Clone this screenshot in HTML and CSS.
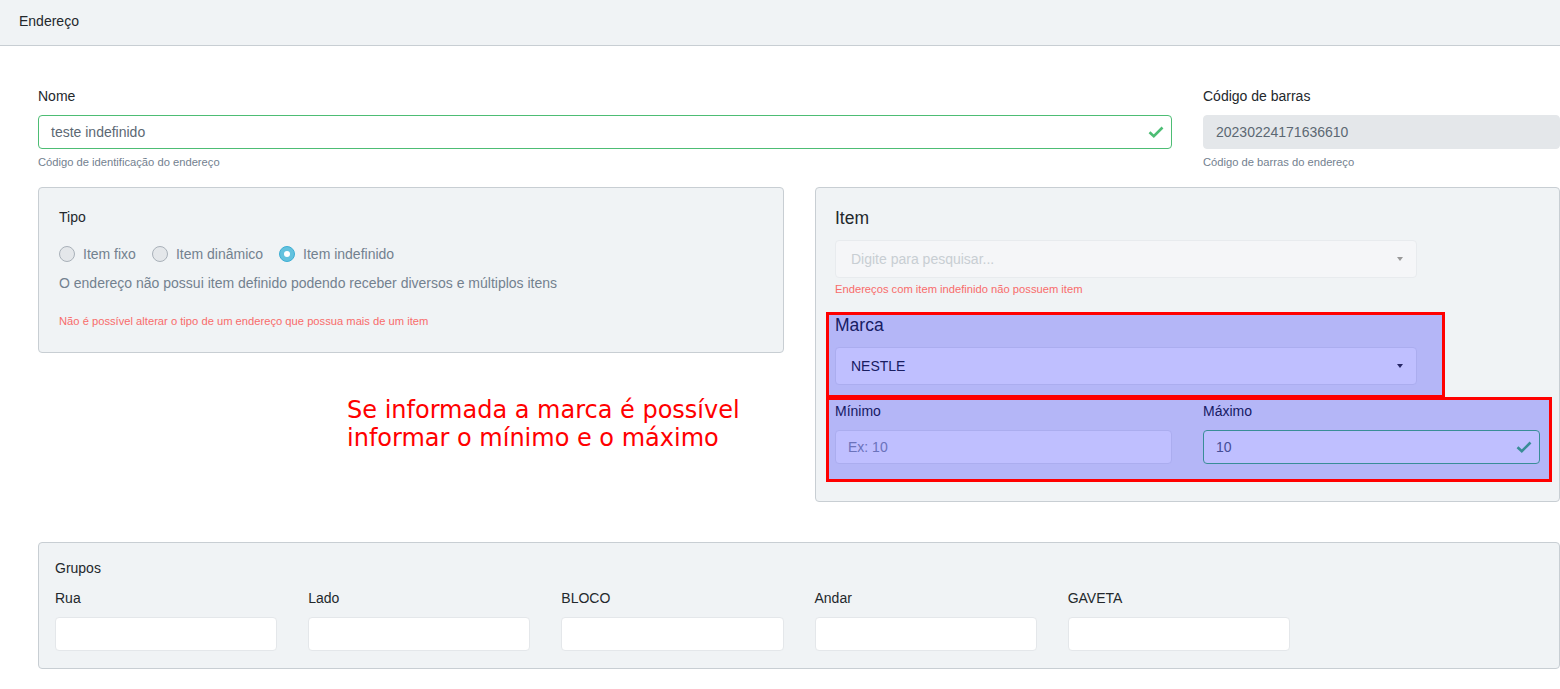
FILE: index.html
```html
<!DOCTYPE html>
<html lang="pt-BR">
<head>
    <meta charset="UTF-8">
    <meta name="viewport" content="width=device-width, initial-scale=1.0">
    <title>Endereço</title>
    <link rel="stylesheet" href="styles.css">
</head>
<body>
    <div class="card-header">Endereço</div>

    <div class="main">
        <div class="row-top">
            <div class="field">
                <label class="lbl">Nome</label>
                <div class="input-wrap">
                    <div class="input valid">teste indefinido</div>
                    <svg class="check" width="16" height="12" viewBox="0 0 16 12"><path d="M1.5 6.2 L5.8 10.2 L14.5 1.5" fill="none" stroke="#4dbd74" stroke-width="2.6"/></svg>
                </div>
                <div class="help">Código de identificação do endereço</div>
            </div>
            <div class="field">
                <label class="lbl">Código de barras</label>
                <div class="input disabled">20230224171636610</div>
                <div class="help">Código de barras do endereço</div>
            </div>
        </div>

        <div class="row-panels">
            <div class="panel tipo">
                <div class="lbl">Tipo</div>
                <div class="radios">
                    <span class="radio"><span class="dot"></span>Item fixo</span>
                    <span class="radio"><span class="dot"></span>Item dinâmico</span>
                    <span class="radio"><span class="dot on"></span>Item indefinido</span>
                </div>
                <p class="desc">O endereço não possui item definido podendo receber diversos e múltiplos itens</p>
                <div class="error tipo-err">Não é possível alterar o tipo de um endereço que possua mais de um item</div>
            </div>

            <div class="panel item">
                <div class="big-lbl">Item</div>
                <div class="select disabled-sel">
                    <span class="placeholder">Digite para pesquisar...</span>
                    <span class="caret light"></span>
                </div>
                <div class="error">Endereços com item indefinido não possuem item</div>

                <div class="big-lbl marca-lbl">Marca</div>
                <div class="select">
                    <span>NESTLE</span>
                    <span class="caret"></span>
                </div>

                <div class="minmax">
                    <div>
                        <label class="lbl">Mínimo</label>
                        <div class="input plain"><span class="placeholder-dark">Ex: 10</span></div>
                    </div>
                    <div>
                        <label class="lbl">Máximo</label>
                        <div class="input-wrap">
                            <div class="input valid">10</div>
                            <svg class="check" width="16" height="12" viewBox="0 0 16 12"><path d="M1.5 6.2 L5.8 10.2 L14.5 1.5" fill="none" stroke="#4dbd74" stroke-width="2.6"/></svg>
                        </div>
                    </div>
                </div>

                <div class="highlight hl-marca"></div>
                <div class="highlight hl-minmax"></div>
            </div>
        </div>

        <div class="panel grupos">
            <div class="lbl">Grupos</div>
            <div class="grupos-grid">
                <div><label class="lbl">Rua</label><div class="input plain"></div></div>
                <div><label class="lbl">Lado</label><div class="input plain"></div></div>
                <div><label class="lbl">BLOCO</label><div class="input plain"></div></div>
                <div><label class="lbl">Andar</label><div class="input plain"></div></div>
                <div><label class="lbl">GAVETA</label><div class="input plain"></div></div>
            </div>
        </div>
    </div>

    <div class="note">Se informada a marca é possível<br>informar o mínimo e o máximo</div>
</body>
</html>
```

FILE: styles.css
```css
body {
    margin: 0;
    font-family: "Liberation Sans", Arial, sans-serif;
    font-size: 14px;
    line-height: 21px;
    color: #23282c;
    background: #fff;
    width: 1560px;
    overflow: hidden;
    position: relative;
}
.card-header {
    height: 45px;
    line-height: 42px;
    padding-left: 19px;
    background: #f0f3f5;
    border-bottom: 1px solid #c8ced3;
}
.main {
    padding: 41px 0 0 38px;
}
.row-top {
    display: grid;
    grid-template-columns: 1134px 1fr;
    column-gap: 31px;
}
.lbl {
    display: block;
    margin-bottom: 8px;
}
.row-top .lbl {
    line-height: 19px;
    margin-bottom: 9px;
}
.input {
    box-sizing: border-box;
    height: 34px;
    padding: 0 12px;
    line-height: 32px;
    border: 1px solid #e4e7ea;
    border-radius: 4px;
    background: #fff;
    color: #5c6873;
}
.input.valid {
    border-color: #4dbd74;
}
.input.disabled {
    background: #e4e7ea;
}
.input-wrap {
    position: relative;
}
.check {
    position: absolute;
    right: 8px;
    top: 11px;
}
.help {
    font-size: 11.2px;
    line-height: 17px;
    margin-top: 5px;
    color: #73818f;
}
.row-panels {
    display: grid;
    grid-template-columns: 746px 1fr;
    column-gap: 31px;
    align-items: start;
    margin-top: 16px;
}
.panel {
    box-sizing: border-box;
    background: #f0f3f5;
    border: 1px solid #c8ced3;
    border-radius: 4px;
}
.tipo {
    padding: 19px 20px 22px;
}
.tipo .lbl {
    margin-bottom: 16px;
}
.radios {
    display: flex;
    color: #73818f;
}
.radio {
    position: relative;
    padding-left: 24px;
    margin-right: 16px;
}
.dot {
    position: absolute;
    left: 0;
    top: 2px;
    width: 16px;
    height: 16px;
    box-sizing: border-box;
    border-radius: 50%;
    background: #e4e7ea;
    border: 1px solid #a9b1b9;
}
.dot.on {
    background: #63c2de;
    border-color: #3eaed4;
}
.dot.on::after {
    content: "";
    position: absolute;
    left: 4px;
    top: 4px;
    width: 6px;
    height: 6px;
    border-radius: 50%;
    background: #fff;
}
.desc {
    margin: 8px 0 0;
    color: #73818f;
}
.error {
    font-size: 11.2px;
    line-height: 17px;
    margin-top: 3px;
    color: #f86c6b;
}
.tipo-err {
    margin-top: 19px;
}
.item {
    position: relative;
    padding: 20px 19px 37px;
}
.big-lbl {
    font-size: 17.5px;
    line-height: 21px;
    margin-bottom: 11px;
}
.marca-lbl {
    margin-top: 17px;
}
.select {
    position: relative;
    box-sizing: border-box;
    width: 582px;
    height: 38px;
    line-height: 36px;
    padding: 0 15px;
    border: 1px solid #e4e7ea;
    border-radius: 4px;
    background: #fff;
    color: #23282c;
}
.disabled-sel {
    background: #f5f6f8;
    border-color: #e8ebee;
}
.placeholder {
    color: #c8ced3;
}
.placeholder-dark {
    color: #8f9aa5;
}
.caret {
    position: absolute;
    right: 13px;
    top: 16px;
    border-left: 3.5px solid transparent;
    border-right: 3.5px solid transparent;
    border-top: 4px solid #333;
}
.caret.light {
    border-top-color: #999;
}
.minmax {
    display: grid;
    grid-template-columns: 1fr 1fr;
    column-gap: 31px;
    margin-top: 16px;
}
.highlight {
    position: absolute;
    left: 10px;
    box-sizing: border-box;
    border: 3px solid #ff0000;
    background: rgba(0, 0, 255, 0.25);
}
.hl-marca {
    top: 124px;
    width: 619px;
    height: 86px;
}
.hl-minmax {
    top: 209px;
    width: 726px;
    height: 85px;
}
.grupos {
    margin-top: 40px;
    padding: 15px 16px 17px;
}
.grupos > .lbl {
    margin-bottom: 9px;
}
.grupos-grid {
    display: grid;
    grid-template-columns: repeat(6, 1fr);
    column-gap: 31px;
}
.note {
    position: absolute;
    left: 347px;
    top: 396px;
    font-family: "DejaVu Sans", sans-serif;
    font-size: 24px;
    line-height: 28px;
    color: #ff0000;
}
```
